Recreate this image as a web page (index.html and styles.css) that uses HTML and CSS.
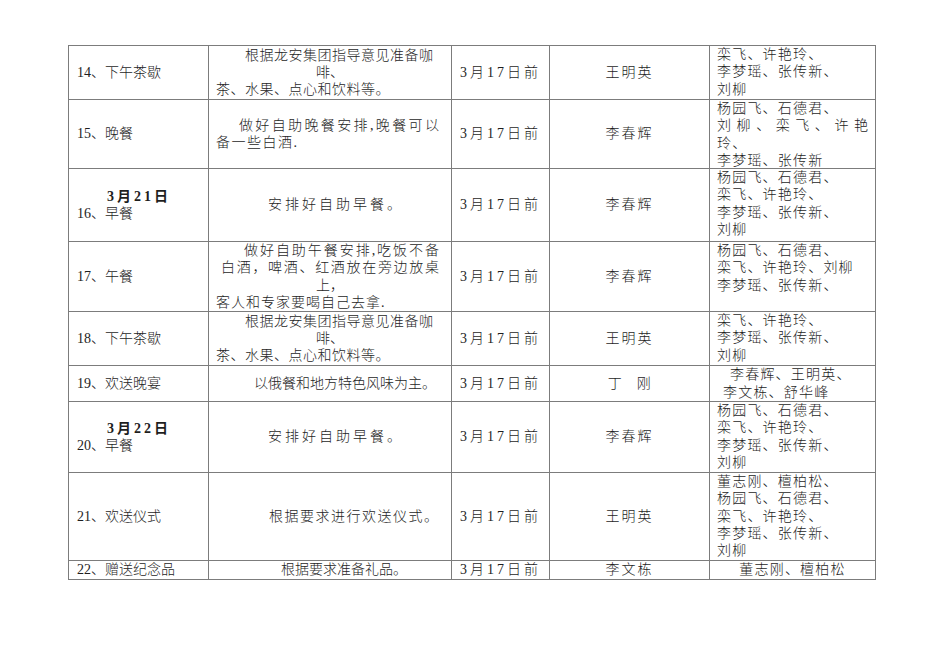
FILE: index.html
```html
<!DOCTYPE html>
<html lang="zh-CN">
<head>
<meta charset="utf-8">
<title>接待安排表</title>
<link rel="stylesheet" href="styles.css">
</head>
<body>
<div class="page">
  <div class="sheet" role="table">
    <!-- 14 -->
    <div class="cell item"><div class="ln">14、下午茶歇</div></div>
    <div class="cell desc">
      <div class="ln ls05 ml29">根据龙安集团指导意见准备咖</div>
      <div class="ln center">啡、</div>
      <div class="ln ls05">茶、水果、点心和饮料等。</div>
    </div>
    <div class="cell date"><div class="ln">3月17日前</div></div>
    <div class="cell owner"><div class="ln">王明英</div></div>
    <div class="cell staff top">
      <div class="ln">栾飞、许艳玲、</div>
      <div class="ln">李梦瑶、张传新、</div>
      <div class="ln">刘柳</div>
    </div>

    <!-- 15 -->
    <div class="cell item"><div class="ln">15、晚餐</div></div>
    <div class="cell desc">
      <div class="ln just ml23 mr5">做好自助晚餐安排,晚餐可以</div>
      <div class="ln ls15">备一些白酒.</div>
    </div>
    <div class="cell date"><div class="ln">3月17日前</div></div>
    <div class="cell owner"><div class="ln">李春辉</div></div>
    <div class="cell staff top">
      <div class="ln">杨园飞、石德君、</div>
      <div class="ln just">刘柳、栾飞、许艳</div>
      <div class="ln">玲、</div>
      <div class="ln">李梦瑶、张传新</div>
    </div>

    <!-- 16 -->
    <div class="cell item">
      <div class="ln day">3月21日</div>
      <div class="ln">16、早餐</div>
    </div>
    <div class="cell desc"><div class="ln ls3 ml52">安排好自助早餐。</div></div>
    <div class="cell date"><div class="ln">3月17日前</div></div>
    <div class="cell owner"><div class="ln">李春辉</div></div>
    <div class="cell staff top">
      <div class="ln">杨园飞、石德君、</div>
      <div class="ln">栾飞、许艳玲、</div>
      <div class="ln">李梦瑶、张传新、</div>
      <div class="ln">刘柳</div>
    </div>

    <!-- 17 -->
    <div class="cell item"><div class="ln">17、午餐</div></div>
    <div class="cell desc">
      <div class="ln just ml28 mr5">做好自助午餐安排,吃饭不备</div>
      <div class="ln just ml5 mr5">白酒，啤酒、红酒放在旁边放桌</div>
      <div class="ln center">上，</div>
      <div class="ln ls1">客人和专家要喝自己去拿.</div>
    </div>
    <div class="cell date"><div class="ln">3月17日前</div></div>
    <div class="cell owner"><div class="ln">李春辉</div></div>
    <div class="cell staff top">
      <div class="ln">杨园飞、石德君、</div>
      <div class="ln">栾飞、许艳玲、刘柳</div>
      <div class="ln">李梦瑶、张传新、</div>
    </div>

    <!-- 18 -->
    <div class="cell item"><div class="ln">18、下午茶歇</div></div>
    <div class="cell desc">
      <div class="ln ls05 ml29">根据龙安集团指导意见准备咖</div>
      <div class="ln center">啡、</div>
      <div class="ln ls05">茶、水果、点心和饮料等。</div>
    </div>
    <div class="cell date"><div class="ln">3月17日前</div></div>
    <div class="cell owner"><div class="ln">王明英</div></div>
    <div class="cell staff top">
      <div class="ln">栾飞、许艳玲、</div>
      <div class="ln">李梦瑶、张传新、</div>
      <div class="ln">刘柳</div>
    </div>

    <!-- 19 -->
    <div class="cell item"><div class="ln">19、欢送晚宴</div></div>
    <div class="cell desc"><div class="ln ml38">以俄餐和地方特色风味为主。</div></div>
    <div class="cell date"><div class="ln">3月17日前</div></div>
    <div class="cell owner"><div class="ln tight">丁　刚</div></div>
    <div class="cell staff">
      <div class="ln ml13">李春辉、王明英、</div>
      <div class="ln ml6">李文栋、舒华峰</div>
    </div>

    <!-- 20 -->
    <div class="cell item">
      <div class="ln day">3月22日</div>
      <div class="ln">20、早餐</div>
    </div>
    <div class="cell desc"><div class="ln ls3 ml52">安排好自助早餐。</div></div>
    <div class="cell date"><div class="ln">3月17日前</div></div>
    <div class="cell owner"><div class="ln">李春辉</div></div>
    <div class="cell staff top">
      <div class="ln">杨园飞、石德君、</div>
      <div class="ln">栾飞、许艳玲、</div>
      <div class="ln">李梦瑶、张传新、</div>
      <div class="ln">刘柳</div>
    </div>

    <!-- 21 -->
    <div class="cell item"><div class="ln">21、欢送仪式</div></div>
    <div class="cell desc"><div class="ln ls15 ml53">根据要求进行欢送仪式。</div></div>
    <div class="cell date"><div class="ln">3月17日前</div></div>
    <div class="cell owner"><div class="ln">王明英</div></div>
    <div class="cell staff top">
      <div class="ln">董志刚、檀柏松、</div>
      <div class="ln">杨园飞、石德君、</div>
      <div class="ln">栾飞、许艳玲、</div>
      <div class="ln">李梦瑶、张传新、</div>
      <div class="ln">刘柳</div>
    </div>

    <!-- 22 -->
    <div class="cell item"><div class="ln">22、赠送纪念品</div></div>
    <div class="cell desc"><div class="ln ml65">根据要求准备礼品。</div></div>
    <div class="cell date"><div class="ln">3月17日前</div></div>
    <div class="cell owner"><div class="ln">李文栋</div></div>
    <div class="cell staff"><div class="ln center">董志刚、檀柏松</div></div>
  </div>
</div>
</body>
</html>
```

FILE: styles.css
```css
html, body {
  margin: 0;
  padding: 0;
  background: #ffffff;
}

body {
  font-family: "Liberation Serif", "Noto Sans CJK SC", serif;
  font-size: 14px;
  color: #1e1e1e;
}

.page {
  padding: 45px 0 0 68px;
}

.sheet {
  display: grid;
  grid-template-columns: 139px 242px 97px 159px 165px;
  grid-template-rows: 53px 68px 72px 69px 53px 35px 70px 87px 18px;
  gap: 1px;
  padding: 1px;
  background: #7c7c7c;
  width: max-content;
}

.cell {
  background: #ffffff;
  display: flex;
  flex-direction: column;
  justify-content: center;
  padding: 0 7px;
  overflow: hidden;
  line-height: 17.3px;
}

.cell.top {
  justify-content: flex-start;
}

.ln {
  white-space: nowrap;
  font-weight: 300;
}

.item {
  padding-left: 8px;
}

.day {
  font-weight: 700;
  text-align: center;
  letter-spacing: 3px;
}

.date .ln {
  text-align: center;
  letter-spacing: 3px;
}

.owner .ln {
  text-align: center;
  letter-spacing: 2px;
}

.owner .ln.tight {
  letter-spacing: 0.5px;
}

.staff .ln {
  letter-spacing: 1.2px;
}

.center { text-align: center; }

.just {
  text-align: justify;
  text-align-last: justify;
}

.staff .ln.just { letter-spacing: 0; }

.ls05 { letter-spacing: 0.5px; }
.ls1 { letter-spacing: 1px; }
.ls15 { letter-spacing: 1.5px; }
.ls3 { letter-spacing: 3px; }

.ml5 { margin-left: 5px; }
.ml6 { margin-left: 6px; }
.ml13 { margin-left: 13px; }
.ml23 { margin-left: 23px; }
.ml28 { margin-left: 28px; }
.ml29 { margin-left: 29px; }
.ml38 { margin-left: 38px; }
.ml52 { margin-left: 52px; }
.ml53 { margin-left: 53px; }
.ml65 { margin-left: 65px; }
.mr5 { margin-right: 5px; }
```
